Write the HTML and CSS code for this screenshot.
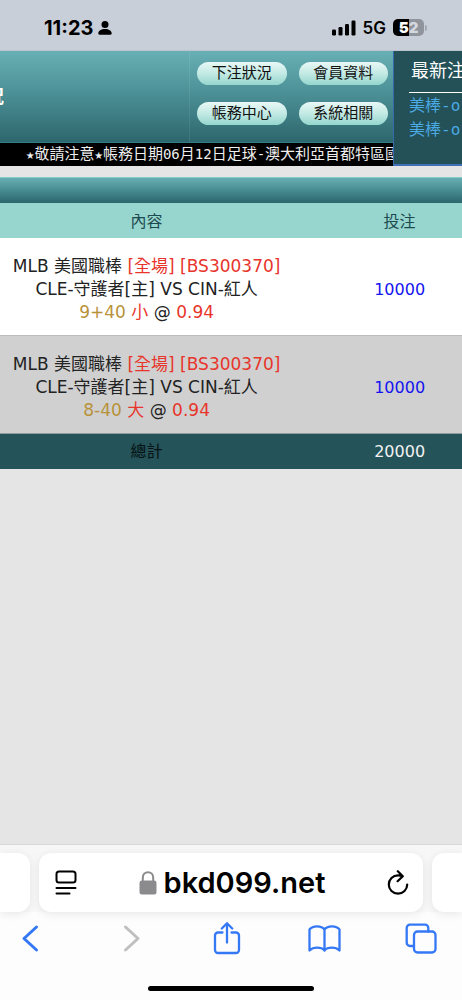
FILE: index.html
```html
<!DOCTYPE html>
<html lang="zh-Hant">
<head>
<meta charset="utf-8">
<meta name="viewport" content="width=device-width, initial-scale=1">
<title>下注狀況</title>
<link rel="stylesheet" href="styles.css">
</head>
<body class="screen">
<div class="status">
  <div class="status-time">
    <span>11:23</span>
    <svg class="icon-person" viewBox="0 0 14 14" width="14" height="14" aria-hidden="true"><circle cx="7" cy="3.600" r="3.500"/><path d="M0.300 12C0.600 9.600 3 7.900 7 7.900s6.400 1.700 6.700 4.100c.1 1-.4 1.700-1.300 1.700H1.600c-.9 0-1.400-.7-1.300-1.700z"/></svg>
  </div>
  <div class="status-signal">
    <svg viewBox="0 0 24 16" width="24" height="16" aria-hidden="true"><rect x="0" y="9.500" width="4" height="6" rx="1.200"/><rect x="6.500" y="7" width="4" height="8.500" rx="1.200"/><rect x="13" y="4" width="4" height="11.500" rx="1.200"/><rect x="19.500" y="0.500" width="4" height="15" rx="1.200"/></svg>
    <span>5G</span>
    <div class="battery"><span class="battery-body"><b>5</b><b>2</b></span><i class="battery-tip"></i></div>
  </div>
</div>

<header class="header">
  <div class="header-main">
    <div class="header-top">
      <div class="title-box"><h1 class="title">下注狀況</h1></div>
      <nav class="menu">
        <button class="pill" type="button">下注狀況</button>
        <button class="pill" type="button">會員資料</button>
        <button class="pill" type="button">帳務中心</button>
        <button class="pill" type="button">系統相關</button>
      </nav>
    </div>
    <div class="ticker"><span class="half">★</span>敬請注意<span class="half">★</span>帳務日期<span class="half">06</span>月<span class="half">12</span>日足球<span class="half">-</span>澳大利亞首都特區國</div>
  </div>
  <aside class="latest">
    <h2 class="latest-title">最新注</h2>
    <ul class="latest-list">
      <li><a href="#">美棒-o</a></li>
      <li><a href="#">美棒-o</a></li>
    </ul>
  </aside>
</header>

<main class="content">
  <div class="bar"></div>
  <table class="bets">
    <thead>
      <tr><th class="detail" scope="col">內容</th><th scope="col">投注</th></tr>
    </thead>
    <tbody>
      <tr>
        <td class="detail">MLB 美國職棒 <span class="red">[全場] [BS300370]</span><br>CLE-守護者[主] VS CIN-紅人<br><span class="gold">9+40</span> <span class="red">小</span> @ <span class="red">0.94</span></td>
        <td class="stake">10000</td>
      </tr>
      <tr>
        <td class="detail">MLB 美國職棒 <span class="red">[全場] [BS300370]</span><br>CLE-守護者[主] VS CIN-紅人<br><span class="gold">8-40</span> <span class="red">大</span> @ <span class="red">0.94</span></td>
        <td class="stake">10000</td>
      </tr>
    </tbody>
    <tfoot>
      <tr><td class="detail total">總計</td><td>20000</td></tr>
    </tfoot>
  </table>
</main>

<footer class="browser">
  <div class="tabs">
    <div class="tab tab-prev"></div>
    <div class="tab tab-current">
      <button class="icon-button" type="button" aria-label="Page menu">
        <svg viewBox="0 0 22 26" width="22" height="26" fill="none" stroke="#000" stroke-width="2" stroke-linecap="round"><rect x="1.500" y="1.500" width="19" height="11" rx="2.500"/><path d="M1.500 18h19M1.500 23.500h13"/></svg>
      </button>
      <div class="address">
        <svg viewBox="0 0 18 24" width="18" height="24" aria-hidden="true"><rect x="0.500" y="9.500" width="17" height="14" rx="2.500" fill="#8b8b8e"/><path d="M3.800 10V6.500C3.800 3.300 6 1.200 9 1.200s5.200 2.100 5.200 5.300V10" fill="none" stroke="#8b8b8e" stroke-width="2"/></svg>
        <span>bkd099.net</span>
      </div>
      <button class="icon-button" type="button" aria-label="Reload">
        <svg viewBox="0 0 22 26" width="22" height="26" fill="none" stroke="#000" stroke-width="2.200" stroke-linecap="round" stroke-linejoin="round"><path d="M20.200 14.500A9.200 9.200 0 1 1 11 5.300c1.700 0 3 .3 4.600.9M10.800 1.200l5 5-5.200 5"/></svg>
      </button>
    </div>
    <div class="tab tab-next"></div>
  </div>
  <nav class="toolbar">
    <button class="icon-button" type="button" aria-label="Back">
      <svg viewBox="0 0 34 34" width="34" height="34"><path d="M22.500 5 10 16.500 22.500 28"/></svg>
    </button>
    <button class="icon-button" type="button" aria-label="Forward" disabled>
      <svg class="disabled" viewBox="0 0 34 34" width="34" height="34"><path d="M13.500 5 26 16.500 13.500 28"/></svg>
    </button>
    <button class="icon-button" type="button" aria-label="Share">
      <svg class="thin" viewBox="0 0 34 34" width="34" height="34"><path d="M13.500 10.500H9A3 3 0 0 0 6 13.500V28A3 3 0 0 0 9 31H27A3 3 0 0 0 30 28V13.500A3 3 0 0 0 27 10.500H22.500M18 20.500V1.500M12.800 6.500 18 1.300l5.200 5.200"/></svg>
    </button>
    <button class="icon-button" type="button" aria-label="Bookmarks">
      <svg class="thin" viewBox="0 0 34 34" width="34" height="34"><path d="M17.500 28.500V7.500C16 5.300 13 4.300 10 4.300 6.500 4.300 4 5.500 2.500 7.500V28.500C4.500 26.600 7 25.700 10 25.700S16 26.600 17.500 28.500C19 26.600 22 25.700 25 25.700S30.500 26.600 32.500 28.500V7.500C31 5.500 28.500 4.300 25 4.300 22 4.300 19 5.300 17.500 7.500"/></svg>
    </button>
    <button class="icon-button" type="button" aria-label="Tabs">
      <svg class="thin" viewBox="0 0 34 34" width="34" height="34"><rect x="10" y="9.500" width="21.500" height="21" rx="3.500"/><path d="M10 24H6A3.300 3.300 0 0 1 2.700 20.700V6A3.300 3.300 0 0 1 6 2.700H21A3.300 3.300 0 0 1 24.300 6V9.500"/></svg>
    </button>
  </nav>
  <div class="home-indicator"></div>
</footer>
</body>
</html>
```

FILE: styles.css
```css
* { box-sizing: border-box; }

.screen {
  margin: 0;
  min-height: 100vh;
  display: flex;
  flex-direction: column;
  overflow-x: hidden;
  background: #e5e5e5;
  font-family: "DejaVu Sans", "Noto Sans CJK TC", sans-serif;
  font-size: 16px;
  color: #222;
}

button {
  margin: 0;
  padding: 0;
  border: 0;
  background: none;
  font: inherit;
  color: inherit;
}

svg { display: block; }

/* Status bar */
.status {
  height: 51px;
  padding: 5px 35px 0 44px;
  display: flex;
  align-items: center;
  justify-content: space-between;
  background: #c9cfd8;
  border-bottom: 1px solid #b9c4cb;
  font-family: Inter, sans-serif;
  font-weight: 700;
  font-size: 20px;
  color: #000;
}
.status-time { display: flex; align-items: center; gap: 5px; }
.status-signal { display: flex; align-items: center; gap: 7px; font-size: 17px; font-weight: 600; }
.battery { display: flex; align-items: center; gap: 1px; }
.battery-body {
  width: 31px;
  height: 17px;
  display: flex;
  align-items: center;
  justify-content: center;
  border-radius: 5px;
  background: linear-gradient(90deg, #000 50%, #90949c 50%);
  color: #d4d8df;
  font-size: 15px;
  line-height: 17px;
}
.battery-body b:first-child { color: #fff; }
.battery-tip { width: 2px; height: 6px; border-radius: 0 2px 2px 0; background: #a3a7af; }

/* Site header */
.header { display: flex; height: 115px; }
.header-main { flex: 1; min-width: 0; display: flex; flex-direction: column; }
.header-top {
  flex: 1;
  display: flex;
  background: linear-gradient(#68b0b5, #4c9197 45%, #2d676d);
  border-bottom: 1px solid #2f8187;
}
.title-box { flex: 1; display: flex; align-items: center; border-right: 1px solid rgba(255, 255, 255, 0.08); }
.title {
  width: 4px;
  margin: 0;
  display: flex;
  justify-content: flex-end;
  overflow: hidden;
  white-space: nowrap;
  font-size: 18px;
  line-height: 24px;
  color: #fff;
}
.menu {
  width: 203px;
  padding: 11px 5px 0 7px;
  display: grid;
  grid-template-columns: 1fr 1fr;
  grid-auto-rows: 23px;
  gap: 17px 12px;
}
.pill {
  border-radius: 12px;
  background: linear-gradient(#e9f8f6, #c3e9e4 50%, #94d6cd);
  font-size: 15px;
  line-height: 23px;
  color: #111;
}
.ticker {
  height: 23px;
  padding-left: 26px;
  overflow: hidden;
  white-space: nowrap;
  background: #000;
  color: #eee;
  font-family: "DejaVu Sans Mono", "Noto Sans CJK TC", monospace;
  font-size: 15px;
  line-height: 22px;
}
.half { font-size: 14px; }
.latest {
  width: 69px;
  overflow: hidden;
  padding: 5px 0 0 15px;
  background: #235157;
  border-left: 1px solid #3568ad;
  border-bottom: 2px solid #3f70b8;
  font-family: "DejaVu Sans Mono", "Noto Sans CJK TC", monospace;
}
.latest-title {
  margin: 0;
  padding: 2px 0 8px 2px;
  border-bottom: 1px solid #fff;
  white-space: nowrap;
  font-size: 18px;
  font-weight: 400;
  line-height: 26px;
  color: #fff;
}
.latest-list { margin: 0; padding: 1px 0 0; list-style: none; white-space: nowrap; line-height: 24px; }
.latest-list a { color: #4ba9e3; text-decoration: none; }

/* Bet list */
.content { flex: 1; padding-top: 11px; }
.bar {
  height: 26px;
  border-top: 1px solid #85cbc8;
  background: linear-gradient(#67aeb3, #468b90 50%, #2b666c);
}
.bets { width: 100%; border-collapse: collapse; table-layout: fixed; text-align: center; line-height: 23px; }
.bets th, .bets td { padding: 6px 0; }
.bets th { width: 27%; padding: 7px 0 5px; font-weight: 400; background: #97d6ce; color: #1d4a50; }
.bets th.detail { width: 73%; }
.bets .detail { padding-right: 44px; white-space: nowrap; }
.bets tbody td { padding-top: 17px; padding-bottom: 11px; border-bottom: 1px solid #bcbcbc; background: #fff; }
.bets tbody .detail { font-size: 17px; }
.bets tbody tr:nth-child(2) td { background: #d0d0d0; border-color: #939b9c; }
.bets tbody .stake { color: #1414f0; }
.bets tfoot td { background: #245359; color: #f2f2f2; }
.bets tfoot .total { color: #061214; }
.red { color: #e8352b; }
.gold { color: #b8923a; }

/* Browser controls */
.browser { background: #fdfdfd; border-top: 1px solid #d8d8d8; padding-bottom: 9px; overflow: hidden; }
.tabs { display: flex; gap: 9px; padding-top: 8px; background: linear-gradient(#f7f7f7, #f9f9f9); }
.tab { height: 59px; background: #fff; box-shadow: 0 2px 10px rgba(0, 0, 0, 0.09); }
.tab-prev, .tab-next { width: 30px; }
.tab-prev { border-radius: 0 12px 12px 0; }
.tab-next { border-radius: 12px 0 0 12px; }
.tab-current {
  flex: 1;
  padding: 0 14px 0 16px;
  border-radius: 12px;
  display: flex;
  align-items: center;
  justify-content: space-between;
}
.address {
  display: flex;
  align-items: center;
  gap: 7px;
  font-family: Inter, sans-serif;
  font-size: 29px;
  font-weight: 600;
  color: #000;
}
.toolbar {
  height: 53px;
  padding: 0 24px 0 14px;
  display: flex;
  align-items: center;
  justify-content: space-between;
  fill: none;
  stroke: #3478f6;
  stroke-width: 3;
  stroke-linecap: round;
  stroke-linejoin: round;
}
.toolbar .disabled { stroke: #bfbfbf; }
.toolbar .thin { stroke-width: 2.3; }
.home-indicator { width: 166px; height: 5px; margin: 21px auto 0; border-radius: 3px; background: #000; }
```
